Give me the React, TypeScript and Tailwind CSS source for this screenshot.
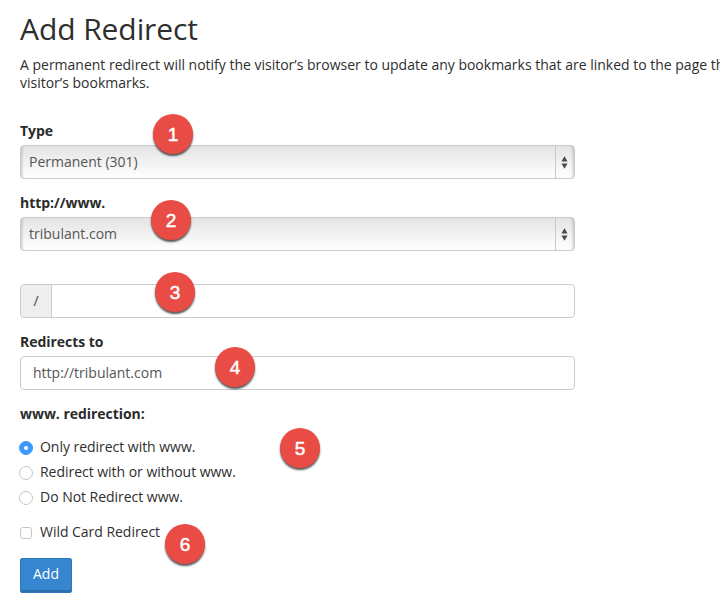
import type { ReactNode } from "react";

function Badge({ n, place }: { n: number; place: string }) {
  return (
    <span
      aria-hidden="true"
      className={`absolute flex h-10 w-10 items-center justify-center rounded-full bg-[#e94b45] font-['Liberation_Sans',sans-serif] text-[19px] leading-none font-normal text-white shadow-[0_2px_2px_rgba(0,0,0,0.65)] [-webkit-text-stroke:0.5px_white] ${place}`}
    >
      {n}
    </span>
  );
}

function Label({ children }: { children: ReactNode }) {
  return <div className="h-[18px] text-[14px] leading-[18px] font-bold tracking-[-0.04px] text-[#2b2b2b]">{children}</div>;
}

function Select({ value }: { value: string }) {
  return (
    <div className="mt-[5px] flex h-[34px] w-[555px] overflow-hidden rounded-[4px] border border-[#cbcbcb] bg-linear-to-b from-[#e4e4e4] to-white shadow-[inset_3px_0_3px_-2px_rgba(0,0,0,0.2),inset_-3px_0_3px_-2px_rgba(0,0,0,0.2)]">
      <span className="flex-1 pl-2 text-[14px] leading-[32px] text-[#555]">{value}</span>
      <span className="flex w-[19px] items-center border-l border-[#c8c8c8] pl-[5px]">
        <svg width="7" height="13" viewBox="0 0 7 13" fill="#4a4a4a">
          <path d="M3.5 0.3L6.6 5.6H.4zM3.5 12.7L6.6 7.4H.4z" />
        </svg>
      </span>
    </div>
  );
}

function Radio({ label, checked = false }: { label: string; checked?: boolean }) {
  return (
    <div className="flex h-[25px] items-center">
      <span
        className={`mt-[2px] -ml-px flex h-[14px] w-[14px] items-center justify-center rounded-full border ${checked ? "border-[#3b99fc] bg-[#3b99fc]" : "border-[#c6c6c6] bg-white"}`}
      >
        {checked && <span className="h-1 w-1 rounded-full bg-white" />}
      </span>
      <span className="ml-[7px] text-[14px] leading-[18px] tracking-[-0.03px]">{label}</span>
    </div>
  );
}

export default function App() {
  return (
    <main className="relative h-[611px] w-[720px] overflow-hidden bg-white pl-5 font-['Open_Sans','Noto_Sans',sans-serif] text-[14px] text-[#2e2e2e]">
      <h1 className="pt-[9px] text-[30px] leading-[40px] font-normal tracking-[-0.08px]">Add Redirect</h1>
      <p className="mt-[7px] text-[14px] leading-[18px] tracking-[-0.005px] whitespace-nowrap">
        A permanent redirect will notify the visitor’s browser to update any bookmarks that are linked to the page th
        <br />
        visitor’s bookmarks.
      </p>

      <div className="mt-[30px]">
        <Label>Type</Label>
        <Select value="Permanent (301)" />
      </div>
      <div className="mt-[15px]">
        <Label>http://www.</Label>
        <Select value="tribulant.com" />
      </div>
      <div className="mt-[33px] flex h-[34px] w-[555px] overflow-hidden rounded-[4px] border border-[#cbcbcb] bg-white">
        <span className="w-[31px] border-r border-[#cbcbcb] bg-[#eee] text-center text-[14px] leading-[32px] text-[#444]">
          /
        </span>
      </div>
      <div className="mt-[15px]">
        <Label>Redirects to</Label>
        <div className="mt-[5px] h-[34px] w-[555px] rounded-[4px] border border-[#cbcbcb] pl-3 text-[14px] leading-[32px] text-[#555]">
          http://tribulant.com
        </div>
      </div>
      <div className="mt-[15px]">
        <Label>www. redirection:</Label>
        <div className="mt-[11px]">
          <Radio label="Only redirect with www." checked />
          <Radio label="Redirect with or without www." />
          <Radio label="Do Not Redirect www." />
        </div>
      </div>
      <div className="mt-[10px] flex h-[25px] items-center">
        <span className="mt-[2px] h-3 w-3 rounded-[3px] border border-[#c6c6c6] bg-white" />
        <span className="ml-2 leading-[18px] tracking-[-0.03px]">Wild Card Redirect</span>
      </div>
      <button
        type="button"
        className="mt-[14px] block h-[35px] w-[52px] rounded-[2px] border border-[#2f78bc] bg-[#3686cf] pb-[3px] text-[14px] leading-[30px] text-white shadow-[inset_0_-2px_0_#2b6fb0]"
      >
        Add
      </button>

      <Badge n={1} place="left-[153px] top-[114px]" />
      <Badge n={2} place="left-[151px] top-[200px]" />
      <Badge n={3} place="left-[155px] top-[272px]" />
      <Badge n={4} place="left-[215px] top-[347px]" />
      <Badge n={5} place="left-[280px] top-[428px]" />
      <Badge n={6} place="left-[165px] top-[524px]" />
    </main>
  );
}
